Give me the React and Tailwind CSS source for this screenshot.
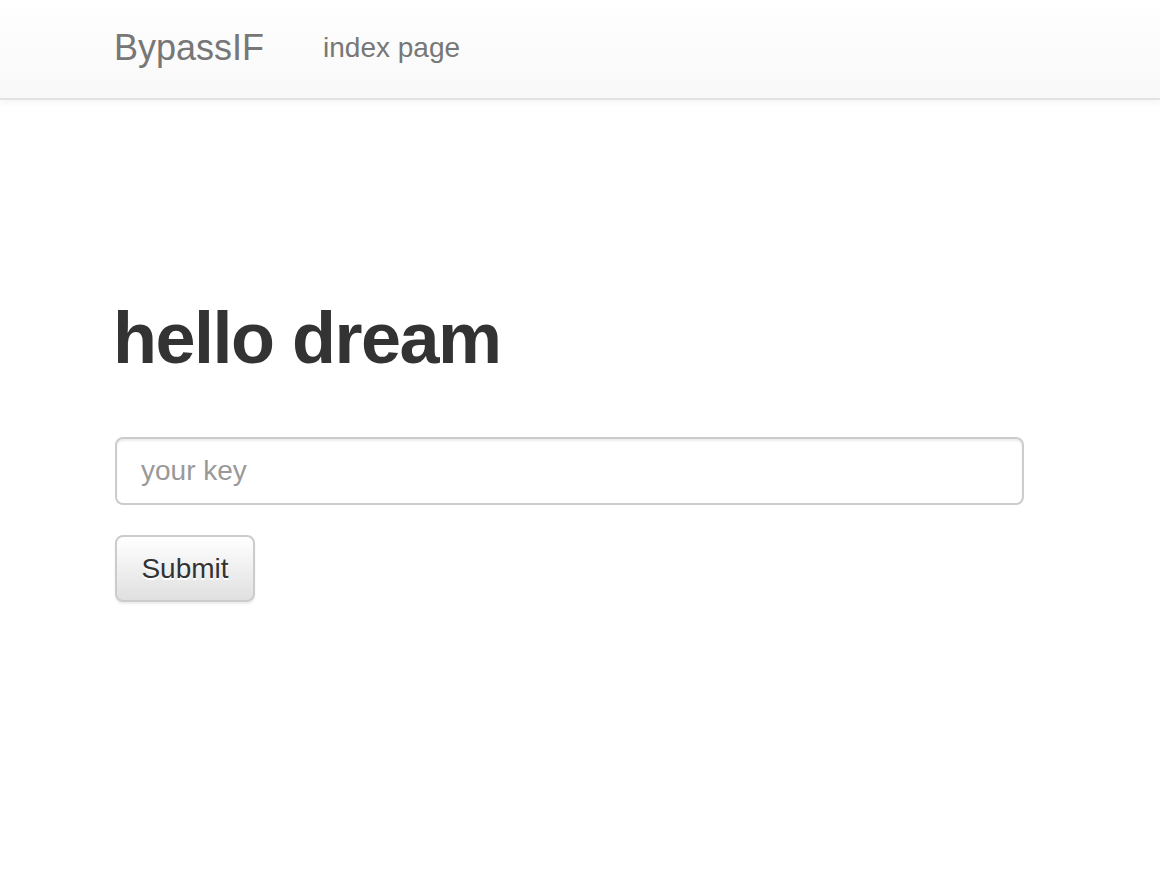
import React from 'react';

const App = () => {
  return (
    <div className="min-h-[876px] bg-white" style={{ fontFamily: '"Liberation Sans", Arial, sans-serif' }}>
      {/* Navbar */}
      <nav className="h-[100px] bg-gradient-to-b from-white to-[#f8f8f8] border-b-2 border-[#e3e3e3] shadow-[0_2px_8px_rgba(0,0,0,0.05)]">
        <div className="ml-[114px] h-full flex items-center">
          <a className="text-[36px] leading-none text-[#777] pb-[3px]">BypassIF</a>
          <a className="ml-[59px] text-[28px] leading-none text-[#777] pb-[2px]">index page</a>
        </div>
      </nav>

      {/* Content */}
      <div className="ml-[115px] w-[909px]">
        <h1 className="mt-[202px] -ml-[2px] text-[72px] leading-none font-bold tracking-[-1.5px] text-[#333]">hello dream</h1>
        <form className="mt-[63px]" onSubmit={(e) => e.preventDefault()}>
          <input
            type="text"
            placeholder="your key"
            className="w-full h-[68px] px-[24px] text-[28px] text-[#555] placeholder:text-[#999] border-2 border-[#ccc] rounded-[8px] shadow-[inset_0_2px_2px_rgba(0,0,0,0.075)] outline-none"
          />
          <button
            type="submit"
            className="mt-[30px] w-[140px] h-[67px] text-[28px] text-[#333] bg-gradient-to-b from-white to-[#e0e0e0] border-2 border-[#ccc] rounded-[8px] shadow-[0_2px_2px_rgba(0,0,0,0.08)] [text-shadow:0_2px_0_#fff]"
          >
            Submit
          </button>
        </form>
      </div>
    </div>
  );
};

export default App;
